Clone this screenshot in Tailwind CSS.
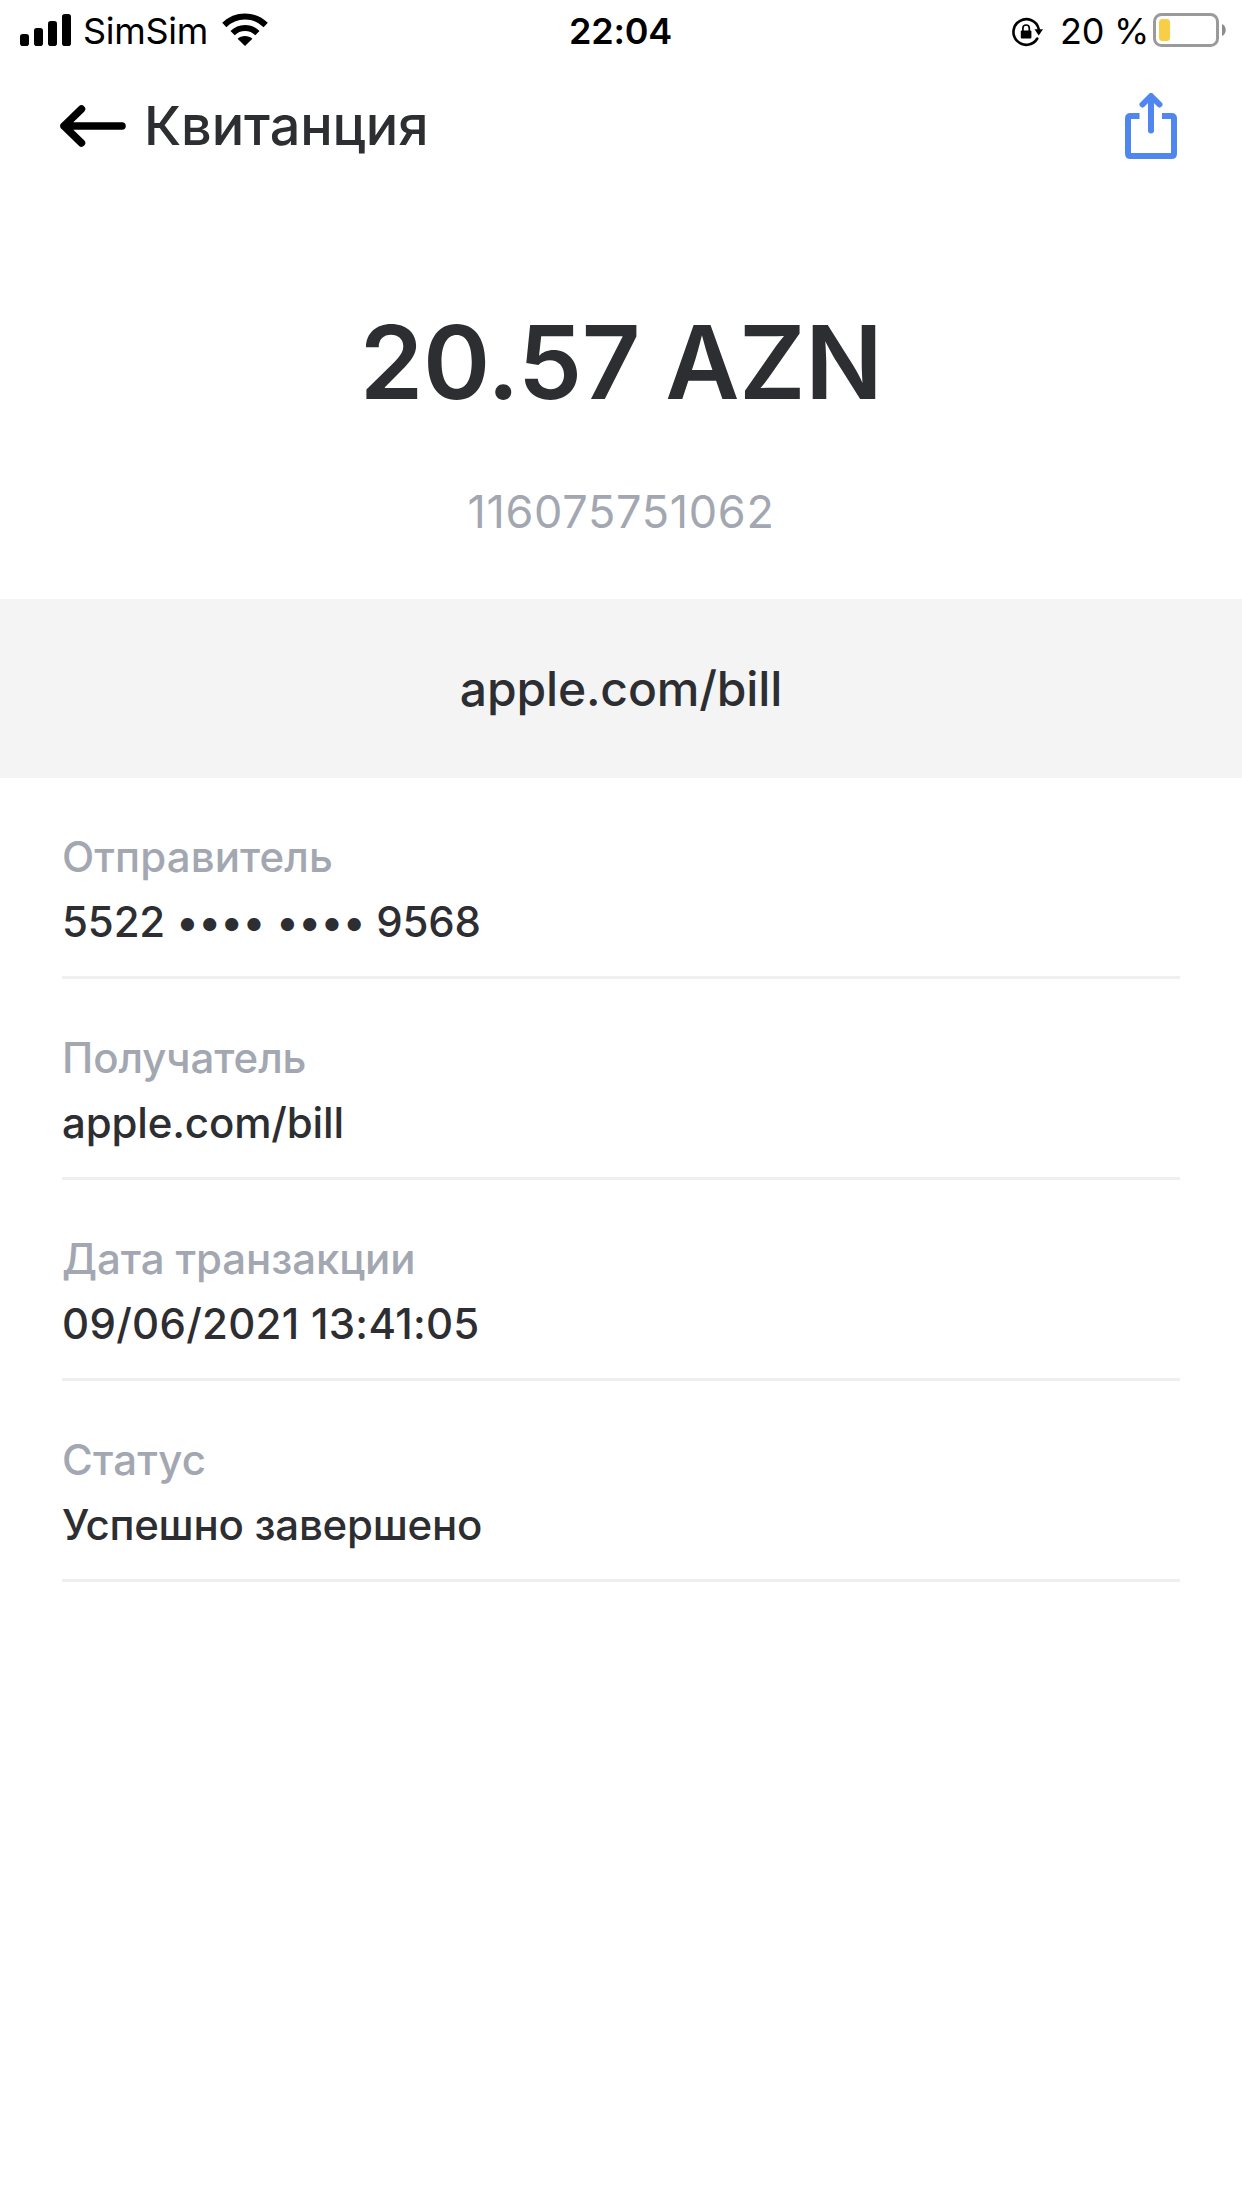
<!DOCTYPE html>
<html lang="ru">
<head>
<meta charset="utf-8">
<title>Квитанция</title>
<script src="https://cdn.jsdelivr.net/npm/@tailwindcss/browser@4"></script>
</head>
<body class="min-h-screen bg-white font-[Inter,sans-serif] text-[#2d2e32]">
  <header>
    <div class="grid h-[62px] grid-cols-3 items-center pr-4 pl-5 text-[36px] leading-[62px] text-black">
      <div class="flex items-center">
        <svg class="h-[62px] w-[52px]" viewBox="20 0 52 62">
          <rect x="20" y="34" width="9" height="12" rx="2.8"/>
          <rect x="34" y="28" width="9" height="18" rx="2.8"/>
          <rect x="48" y="21" width="9" height="25" rx="2.8"/>
          <rect x="62" y="14" width="9" height="32" rx="2.8"/>
        </svg>
        <span class="ml-[11px] w-[138px] tracking-[-0.3px] whitespace-nowrap">SimSim</span>
        <svg class="h-[62px] w-[48px]" viewBox="221 0 48 62">
          <path d="M245 46L237.6 38.7C241.5 35 248.500 35 252.400 38.7Z" />
          <path d="M232.600 33.200A17.500 17.500 0 0 1 257.400 33.200" fill="none" stroke="#000" stroke-width="6"/>
          <path d="M224.300 25A29.500 29.500 0 0 1 265.700 25" fill="none" stroke="#000" stroke-width="6"/>
        </svg>
      </div>
      <div class="pr-[5px] text-center font-semibold tracking-[-0.2px] whitespace-nowrap">22:04</div>
      <div class="flex items-center justify-end">
        <svg class="h-[62px] w-[32px]" viewBox="1011 0 32 62">
          <path d="M1037.300 38.500A12.800 12.800 0 1 1 1038.700 29" fill="none" stroke="#000" stroke-width="2.600" stroke-linecap="round"/>
          <path d="M1034.500 29.300H1043L1038.700 35.500Z"/>
          <rect x="1020.800" y="30.500" width="10.600" height="8" rx="1"/>
          <path d="M1022.900 31V28.200A3.200 3.200 0 0 1 1029.300 28.200V31" fill="none" stroke="#000" stroke-width="1.700"/>
        </svg>
        <span class="ml-[17px] w-[92px] tracking-[-0.3px] whitespace-nowrap">20 %</span>
        <svg class="h-[62px] w-[74px]" viewBox="1152 0 74 62">
          <rect x="1154.500" y="14.500" width="63" height="31" rx="7" fill="none" stroke="#9a9a9a" stroke-width="3"/>
          <rect x="1159" y="19" width="11" height="22" rx="3.500" fill="#f7ce46"/>
          <path d="M1222 24C1227 26 1227 34 1222 36Z" fill="#8c8c8c"/>
        </svg>
      </div>
    </div>
    <div class="flex h-[128px] items-center justify-between pr-[65px] pl-[60px]">
      <div class="flex items-center">
        <svg class="h-[42px] w-[66px]" viewBox="60 105 66 42" fill="none" stroke="#000" stroke-width="7.500" stroke-linecap="round" stroke-linejoin="round">
          <path d="M122 126H64M81.500 109L64 126L81.500 143"/>
        </svg>
        <h1 class="ml-[18px] text-[54px] leading-[60px] font-medium tracking-[-0.1px]">Квитанция</h1>
      </div>
      <svg class="h-[66px] w-[52px]" viewBox="1125 93 52 66" fill="none" stroke="#4f86f0" stroke-width="6">
        <path d="M1139.500 116H1130.500Q1128 116 1128 118.500V153.500Q1128 156 1130.500 156H1171.500Q1174 156 1174 153.500V118.500Q1174 116 1171.500 116H1162"/>
        <path d="M1151 130.500V98M1142.500 104.500L1151 96L1159.500 104.500" stroke-linecap="round" stroke-linejoin="round"/>
      </svg>
    </div>
  </header>
  <main>
    <section class="flex h-[409px] flex-col items-center pt-[112px]">
      <p class="text-[102px] leading-[120px] font-semibold tracking-[-0.45px]">20.57 AZN</p>
      <p class="mt-[60px] text-[45px] leading-[60px] tracking-[0.7px] text-[#a2a7b1]">116075751062</p>
    </section>
    <section class="flex h-[179px] items-center justify-center bg-[#f4f4f4] text-[48px] leading-[60px] font-medium tracking-[-0.15px]">apple.com/bill</section>
    <dl class="px-[62px] text-[42px] leading-[65px] font-medium">
      <div class="border-b-[3px] border-[#efeff0] pt-[46px] pb-[22px]">
        <dt class="tracking-[0.1px] text-[#a2a7b1]">Отправитель</dt>
        <dd class="tracking-[-0.15px] [font-feature-settings:'calt'_0]">5522 •••• •••• 9568</dd>
      </div>
      <div class="border-b-[3px] border-[#efeff0] pt-[46px] pb-[22px]">
        <dt class="tracking-[-0.1px] text-[#a2a7b1]">Получатель</dt>
        <dd class="tracking-[-0.15px]">apple.com/bill</dd>
      </div>
      <div class="border-b-[3px] border-[#efeff0] pt-[46px] pb-[22px]">
        <dt class="tracking-[-0.1px] text-[#a2a7b1]">Дата транзакции</dt>
        <dd class="tracking-[0.3px]">09/06/2021 13:41:05</dd>
      </div>
      <div class="border-b-[3px] border-[#efeff0] pt-[46px] pb-[22px]">
        <dt class="tracking-[0.2px] text-[#a2a7b1]">Статус</dt>
        <dd class="tracking-[-0.25px]">Успешно завершено</dd>
      </div>
    </dl>
  </main>
</body>
</html>
